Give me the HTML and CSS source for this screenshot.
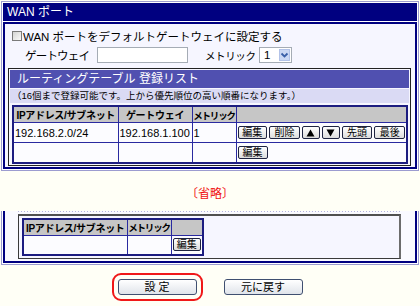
FILE: index.html
```html
<!DOCTYPE html>
<html lang="ja">
<head>
<meta charset="utf-8">
<title>WAN ポート</title>
<link rel="stylesheet" href="styles.css">
</head>
<body>
<div class="panel">
  <div class="title">WAN ポート</div>
  <div class="body">
    <div class="row1"><span class="cb"></span><span>WAN ポートをデフォルトゲートウェイに設定する</span></div>
    <div class="row2">
      <span class="lbl">ゲートウェイ</span>
      <input class="input" type="text" value="">
      <span class="lbl2">メトリック</span>
      <span class="select"><span class="sv">1</span><span class="arrow"><svg width="9" height="8" viewBox="0 0 9 8"><path d="M1.5 2.5 L4.5 5.5 L7.5 2.5" fill="none" stroke="#3a5fa8" stroke-width="1.8"/></svg></span></span>
    </div>
    <div class="section">
      <div class="sec-head">ルーティングテーブル 登録リスト</div>
      <div class="note">（16個まで登録可能です。上から優先順位の高い順番になります。）</div>
      <table class="grid grid1">
        <colgroup><col class="c1"><col class="c2"><col class="c3"><col></colgroup>
        <tr><th>IPアドレス/サブネット</th><th>ゲートウェイ</th><th class="m">メトリック</th><th></th></tr>
        <tr>
          <td>192.168.2.0/24</td><td>192.168.1.100</td><td>1</td>
          <td class="ops"><div class="btns">
            <button class="tb w30">編集</button>
            <button class="tb w31">削除</button>
            <button class="tb w18"><svg width="9" height="8" viewBox="0 0 9 8"><path d="M4.5 0.5 L8.5 7.5 L0.5 7.5 Z" fill="#000"/></svg></button>
            <button class="tb w18"><svg width="9" height="8" viewBox="0 0 9 8"><path d="M0.5 0.5 L8.5 0.5 L4.5 7.5 Z" fill="#000"/></svg></button>
            <button class="tb w31">先頭</button>
            <button class="tb w31">最後</button>
          </div></td>
        </tr>
        <tr>
          <td></td><td></td><td></td>
          <td class="ops"><div class="btns"><button class="tb w30">編集</button></div></td>
        </tr>
      </table>
    </div>
  </div>
</div>

<div class="omit">〔省略〕</div>

<div class="panel cut">
  <div class="body">
    <div class="dots"></div>
    <div class="section2">
      <table class="grid grid2">
        <colgroup><col class="d1"><col class="d2"><col class="d3"></colgroup>
        <tr><th>IPアドレス/サブネット</th><th class="m">メトリック</th><th></th></tr>
        <tr><td></td><td></td><td class="ops"><div class="btns"><button class="tb w30">編集</button></div></td></tr>
      </table>
    </div>
  </div>
</div>

<div class="actions">
  <button class="btn hl">設 定</button>
  <button class="btn">元に戻す</button>
</div>
</body>
</html>
```

FILE: styles.css
```css
* { box-sizing: border-box; }
html, body { margin: 0; padding: 0; }
body {
  width: 420px;
  height: 306px;
  overflow: hidden;
  background: #fffff6;
  font-family: "Liberation Sans", "Noto Sans CJK JP", sans-serif;
  font-size: 12px;
  color: #000;
}

.panel {
  margin: 1px 1px 0;
  border: 1px solid #9c9cd0;
  padding: 1px;
  background: #fff;
}
.title {
  height: 18px;
  background: #000080;
  color: #fff;
  font-size: 12px;
  line-height: 18px;
  padding-left: 4px;
}
.body {
  margin-top: 1px;
  border: 2px solid #000080;
  background: #f6f6ff;
  padding: 4px 4px 1px 3px;
}

.row1 {
  height: 16px;
  display: flex;
  align-items: center;
  padding-left: 4px;
  font-size: 11.5px;
}
.cb {
  width: 10px;
  height: 10px;
  border: 1px solid #7a7a7a;
  background: linear-gradient(135deg, #d4d4d4, #fafafa);
  margin-right: 1px;
}

.row2 {
  height: 16px;
  margin-top: 3px;
  display: flex;
  align-items: center;
  padding-left: 17px;
  font-size: 11.5px;
}
.lbl { width: 72px; white-space: nowrap; letter-spacing: -0.8px; }
.lbl2 { width: 54px; white-space: nowrap; font-size: 10.5px; letter-spacing: -0.4px; }
.input {
  width: 91px;
  height: 16px;
  border: 1px solid #a5acb5;
  background: #fff;
  margin: 0 17px 0 0;
  padding: 0;
}
.select {
  width: 33px;
  height: 16px;
  border: 1px solid #a5acb5;
  background: #fff;
  display: flex;
  align-items: center;
  padding: 1px;
}
.sv { flex: 1; padding-left: 3px; font-size: 11.5px; line-height: 12px; }
.arrow {
  width: 11px;
  height: 12px;
  background: #cbd8f4;
  border: 1px solid #b2c2e8;
  display: flex;
  align-items: center;
  justify-content: center;
}

.section {
  margin-top: 5px;
  border: 1px solid #222;
  padding: 1px 1px 1px;
  background: #f6f6ff;
}
.sec-head {
  height: 18px;
  background: #5050b0;
  color: #fff;
  font-size: 12px;
  line-height: 18px;
  padding-left: 7px;
}
.note {
  margin-top: 1px;
  height: 14px;
  background: #dadaf4;
  font-size: 9.5px;
  line-height: 14px;
  padding-left: 2px;
  white-space: nowrap;
}

.grid {
  border-collapse: collapse;
  table-layout: fixed;
  border: 2px solid #1c1c80;
}
.grid1 { margin: 2px 1px 0 2px; width: 396px; }
.grid1 .c1 { width: 105px; }
.grid1 .c2 { width: 74px; }
.grid1 .c3 { width: 44px; }
.grid th, .grid td {
  border: 1px solid #2a2aa0;
  padding: 0 1px;
  white-space: nowrap;
}
.grid th {
  height: 16px;
  padding: 0;
  background: #c6c6c6;
  font-size: 10px;
  font-weight: bold;
  letter-spacing: -0.3px;
  text-align: center;
}
.grid th.m { font-size: 9.5px; letter-spacing: -1.2px; }
.grid td {
  height: 20px;
  background: #fcfcff;
  font-size: 11px;
}
.btns { display: flex; gap: 2px; }
.tb {
  height: 13px;
  margin: 0;
  padding: 0;
  font-family: inherit;
  font-size: 10px;
  line-height: 11px;
  color: #000;
  border: 1px solid #1e2340;
  border-radius: 2px;
  background: linear-gradient(#ffffff, #dcdcdc);
  display: flex;
  align-items: center;
  justify-content: center;
}
.w30 { width: 30px; }
.w31 { width: 31px; }
.w18 { width: 18px; }

.omit {
  margin-top: 16px;
  text-align: center;
  color: #f01010;
  font-size: 12px;
  line-height: 14px;
}

.panel.cut { margin-top: 10px; border-top: 0; padding-top: 0; }
.panel.cut .body {
  margin-top: 0;
  border-top: 0;
  background: #fafaff;
  padding: 0 14px 2px 13px;
}
.dots {
  height: 1px;
  margin-bottom: 2px;
  background: repeating-linear-gradient(90deg, #b4b4dc 0 1px, transparent 1px 3px);
}
.section2 {
  border: 1px solid #3a3a3a;
  border-top: 2px solid #505050;
  border-right: 2px solid #6c6c6c;
  padding: 2px 2px 2px 3px;
  background: #f6f6ff;
}
.grid2 { width: 182px; }
.grid2 .d1 { width: 104px; }
.grid2 .d2 { width: 44px; }

.actions {
  margin-top: 14px;
  display: flex;
  justify-content: center;
  gap: 27px;
}
.btn {
  width: 79px;
  height: 16px;
  margin: 0;
  padding: 0;
  font-family: inherit;
  font-size: 11px;
  line-height: 14px;
  color: #000;
  border: 1px solid #3f4f70;
  border-radius: 3px;
  background: linear-gradient(#ffffff, #e0e4ea);
}
.hl {
  outline: 2px solid #f01818;
  outline-offset: 4px;
}
```
